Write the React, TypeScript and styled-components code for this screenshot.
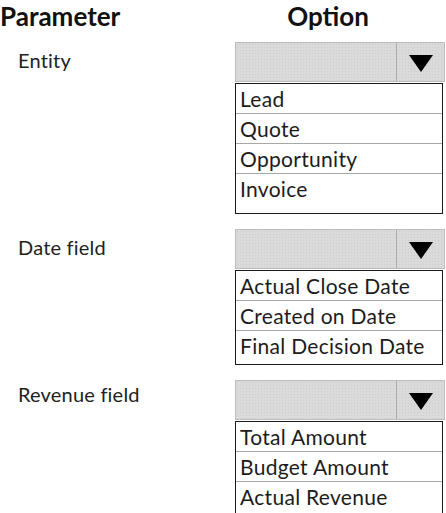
import React from "react";
import styled, { createGlobalStyle } from "styled-components";

const GlobalStyle = createGlobalStyle`
  html, body {
    margin: 0;
    padding: 0;
    background: #ffffff;
  }
  body {
    font-family: Lato, "Open Sans", "Liberation Sans", sans-serif;
    color: #1f1f1f;
  }
`;

type Field = {
  label: string;
  options: string[];
  listHeight: number;
  labelTop: number;
};

const fields: Field[] = [
  { label: "Entity", options: ["Lead", "Quote", "Opportunity", "Invoice"], listHeight: 131, labelTop: 5 },
  { label: "Date field", options: ["Actual Close Date", "Created on Date", "Final Decision Date"], listHeight: 95, labelTop: 5 },
  { label: "Revenue field", options: ["Total Amount", "Budget Amount", "Actual Revenue"], listHeight: 96, labelTop: 1 },
];

export default function App() {
  return (
    <>
      <GlobalStyle />
      <Page>
        <HeaderRow>
          <HeadCell>Parameter</HeadCell>
          <HeadCell center>Option</HeadCell>
        </HeaderRow>
        {fields.map((f) => (
          <FieldRow key={f.label}>
            <Label top={f.labelTop}>{f.label}</Label>
            <OptionColumn>
              <SelectBox>
                <SelectValue />
                <ArrowButton>
                  <svg width="24" height="17" viewBox="0 0 24 17">
                    <polygon points="0,0 24,0 12,17" fill="#000" />
                  </svg>
                </ArrowButton>
              </SelectBox>
              <ListBox height={f.listHeight}>
                {f.options.map((o) => (
                  <ListItem key={o}>{o}</ListItem>
                ))}
              </ListBox>
            </OptionColumn>
          </FieldRow>
        ))}
      </Page>
    </>
  );
}

const Page = styled.div`
  width: 446px;
  height: 513px;
  display: flex;
  flex-direction: column;
  gap: 15px;
  overflow: hidden;
`;

const HeaderRow = styled.div`
  display: grid;
  grid-template-columns: 235px 210px;
  height: 27px;
`;

const HeadCell = styled.div<{ center?: boolean }>`
  font-family: Lato, "Open Sans", "Liberation Sans", sans-serif;
  font-weight: 700;
  font-size: 26px;
  line-height: 32px;
  color: #111;
  text-align: ${({ center }) => (center ? "center" : "left")};
  padding-right: ${({ center }) => (center ? "24px" : "0")};
`;

const FieldRow = styled.div`
  display: grid;
  grid-template-columns: 235px 210px;
`;

const Label = styled.div<{ top: number }>`
  padding: ${({ top }) => top}px 0 0 18px;
  font-size: 20px;
  line-height: 26px;
  letter-spacing: 0.2px;
  color: #222;
`;

const OptionColumn = styled.div`
  display: flex;
  flex-direction: column;
  gap: 1px;
`;

const SelectBox = styled.div`
  height: 40px;
  box-sizing: border-box;
  display: flex;
  border: 1px solid #bdbdbd;
  background-color: #dadada;
  background-image: radial-gradient(#cdcdcd 0.6px, transparent 0.8px);
  background-size: 3px 3px;
`;

const SelectValue = styled.div`
  flex: 1;
`;

const ArrowButton = styled.div`
  width: 48px;
  border-left: 1px solid #a9a9a9;
  display: flex;
  align-items: center;
  justify-content: center;
  padding-top: 2px;
  box-sizing: border-box;
`;

const ListBox = styled.div<{ height: number }>`
  width: 208px;
  height: ${({ height }) => height}px;
  box-sizing: border-box;
  border: 1.5px solid #1a1a1a;
  display: flex;
  flex-direction: column;
  background: #fff;
`;

const ListItem = styled.div`
  height: 30px;
  box-sizing: border-box;
  border-bottom: 1px solid #a8a8a8;
  padding: 0 4px;
  font-size: 21px;
  line-height: 30px;
  letter-spacing: 0.3px;
  color: #1c1c1c;
  white-space: nowrap;

  &:last-child {
    border-bottom: none;
  }
`;
